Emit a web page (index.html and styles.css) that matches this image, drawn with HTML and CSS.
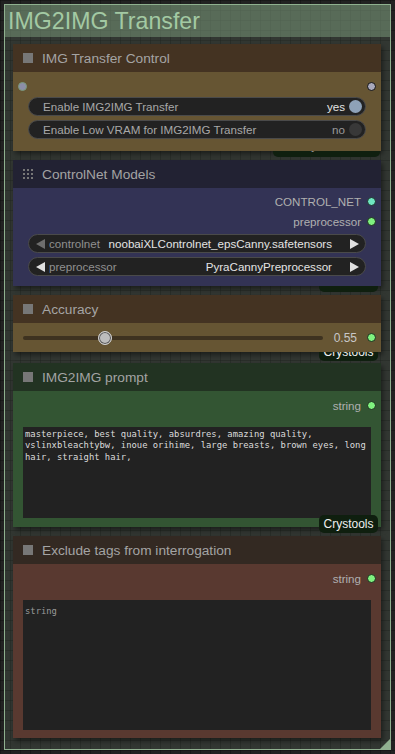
FILE: index.html
```html
<!DOCTYPE html>
<html>
<head>
<meta charset="utf-8">
<link rel="stylesheet" href="styles.css">
</head>
<body>
<div class="group">
  <div class="group-header">IMG2IMG Transfer</div>
  <div class="group-body">

    <div class="node node-yellow n1">
      <div class="node-title"><span class="sq"></span>IMG Transfer Control</div>
      <div class="node-body">
        <div class="slot-row both">
          <span class="dot dot-in"></span>
          <span class="dot dot-out-gray"></span>
        </div>
        <div class="widgets">
          <div class="pill toggle">
            <span class="lbl">Enable IMG2IMG Transfer</span>
            <span class="val on">yes</span>
            <span class="knob knob-on"></span>
          </div>
          <div class="pill toggle">
            <span class="lbl">Enable Low VRAM for IMG2IMG Transfer</span>
            <span class="val">no</span>
            <span class="knob knob-off"></span>
          </div>
        </div>
      </div>
      <div class="badge badge-wide"><span>Comfyroll Studio</span></div>
    </div>

    <div class="node node-blue n2">
      <div class="node-title"><span class="grip">
        <svg width="10" height="10" viewBox="0 0 10 10"><g fill="#777"><rect x="0" y="0" width="2" height="2"/><rect x="4" y="0" width="2" height="2"/><rect x="8" y="0" width="2" height="2"/><rect x="0" y="4" width="2" height="2"/><rect x="4" y="4" width="2" height="2"/><rect x="8" y="4" width="2" height="2"/><rect x="0" y="8" width="2" height="2"/><rect x="4" y="8" width="2" height="2"/><rect x="8" y="8" width="2" height="2"/></g></svg>
      </span>ControlNet Models</div>
      <div class="node-body">
        <div class="slot-row out"><span class="slot-name">CONTROL_NET</span><span class="dot dot-teal"></span></div>
        <div class="slot-row out"><span class="slot-name">preprocessor</span><span class="dot dot-green"></span></div>
        <div class="widgets">
          <div class="pill combo">
            <span class="arr arr-left dim"></span>
            <span class="lbl">controlnet</span>
            <span class="cval">noobaiXLControlnet_epsCanny.safetensors</span>
            <span class="arr arr-right"></span>
          </div>
          <div class="pill combo">
            <span class="arr arr-left"></span>
            <span class="lbl">preprocessor</span>
            <span class="cval">PyraCannyPreprocessor</span>
            <span class="arr arr-right"></span>
          </div>
        </div>
      </div>
      <div class="badge badge-empty"></div>
    </div>

    <div class="node node-yellow n3">
      <div class="node-title"><span class="sq"></span>Accuracy</div>
      <div class="node-body slider-body">
        <div class="slider">
          <div class="track"></div>
          <span class="thumb"></span>
        </div>
        <span class="slider-val">0.55</span>
        <span class="dot dot-green"></span>
      </div>
      <div class="badge badge-low">Crystools</div>
    </div>

    <div class="node node-green n4">
      <div class="node-title"><span class="sq"></span>IMG2IMG prompt</div>
      <div class="node-body">
        <div class="slot-row out"><span class="slot-name">string</span><span class="dot dot-green"></span></div>
        <div class="textarea prompt">masterpiece, best quality, absurdres, amazing quality, vslinxbleachtybw, inoue orihime, large breasts, brown eyes, long hair, straight hair,</div>
      </div>
      <div class="badge badge-top">Crystools</div>
    </div>

    <div class="node node-brown n5">
      <div class="node-title"><span class="sq"></span>Exclude tags from interrogation</div>
      <div class="node-body">
        <div class="slot-row out"><span class="slot-name">string</span><span class="dot dot-green"></span></div>
        <div class="textarea exclude"><span class="ph">string</span></div>
      </div>
    </div>

  </div>
  <span class="resize"></span>
</div>
</body>
</html>
```

FILE: styles.css
```css
html, body {
  margin: 0;
  padding: 0;
}
body {
  width: 395px;
  height: 754px;
  overflow: hidden;
  background-color: #222;
  background-image:
    linear-gradient(to right, rgba(0,0,0,0.25) 1px, transparent 1px),
    linear-gradient(to bottom, rgba(0,0,0,0.25) 1px, transparent 1px);
  background-size: 10px 10px;
  font-family: "Liberation Sans", Arial, sans-serif;
}
.group {
  position: relative;
  box-sizing: border-box;
  margin: 4px 0 0 4px;
  width: 387px;
  height: 746px;
  border: 1px solid #8fb08f;
  background: rgba(136,170,136,0.16);
  display: flex;
  flex-direction: column;
}
.group-header {
  height: 32px;
  background: rgba(136,170,136,0.45);
  color: #a3c9a3;
  font-size: 23.2px;
  line-height: 32px;
  padding-left: 3px;
  white-space: nowrap;
}
.group-body {
  display: flex;
  flex-direction: column;
  padding: 7px 0 0 8px;
}
.node {
  position: relative;
  width: 368px;
  box-shadow: 2px 3px 5px rgba(0,0,0,0.45);
}
.n1 { z-index: 5; }
.n2 { margin-top: 9px; z-index: 4; }
.n3 { margin-top: 9px; z-index: 3; }
.n4 { margin-top: 11px; z-index: 2; }
.n5 { margin-top: 9px; z-index: 1; }

.node-title {
  position: relative;
  z-index: 2;
  height: 28px;
  display: flex;
  align-items: center;
  color: #a4a4a4;
  font-size: 13.7px;
  padding-left: 10px;
  white-space: nowrap;
}
.sq, .grip {
  width: 10px;
  height: 10px;
  margin-right: 9px;
  flex: none;
}
.sq { background: #777; }
.grip svg { display: block; }
.node-body {
  position: relative;
  z-index: 2;
}
.node-yellow .node-title { background: #443322; }
.node-yellow .node-body { background: #665533; }
.node-blue .node-title { background: #222233; }
.node-blue .node-body { background: #333355; }
.node-green .node-title { background: #223322; }
.node-green .node-body { background: #335533; }
.node-brown .node-title { background: #332922; }
.node-brown .node-body { background: #593930; }

.n1 .node-body { height: 79px; padding-top: 4px; box-sizing: border-box; }
.n2 .node-body { height: 98px; padding-top: 4px; box-sizing: border-box; }
.n3 .node-body { height: 29px; }
.n4 .node-body { height: 136px; padding-top: 4px; box-sizing: border-box; }
.n5 .node-body { height: 174px; padding-top: 4px; box-sizing: border-box; }

.slot-row {
  height: 20px;
  display: flex;
  align-items: center;
  padding: 0 5px 0 5px;
  font-size: 11.6px;
  color: #b0b0b0;
}
.n2 .slot-row { height: 19.5px; }
.slot-row.both { justify-content: space-between; }
.slot-row.out { justify-content: flex-end; }
.slot-name { margin-right: 6px; white-space: nowrap; }

.dot {
  display: block;
  box-sizing: border-box;
  width: 9px;
  height: 9px;
  border-radius: 50%;
  flex: none;
}
.dot-in { background: #8c8ea8; border: 1px solid #7a9a7a; }
.dot-out-gray { background: #a8a8bc; border: 1.5px solid #111; }
.dot-green { background: #7ff27f; border: 1.5px solid #1c2a1c; }
.dot-teal { background: #6fe6c0; border: 1.5px solid #1c2a2a; }

.widgets {
  display: flex;
  flex-direction: column;
  gap: 4px;
  margin: 1px 15px 0 15px;
}
.n2 .widgets { margin-top: 3px; }
.pill {
  box-sizing: border-box;
  height: 19px;
  border-radius: 10px;
  background: #222;
  border: 1px solid #4a4a4a;
  display: flex;
  align-items: center;
  font-size: 11.6px;
  white-space: nowrap;
}
.toggle { padding: 0 3px 0 14px; }
.toggle .lbl { color: #a8a8a8; flex: 1; }
.toggle .val { color: #9a9a9a; margin-right: 4px; }
.toggle .val.on { color: #e4e4e4; }
.knob {
  width: 13px;
  height: 13px;
  border-radius: 50%;
}
.knob-on { background: #8ea2b8; }
.knob-off { background: #383838; }

.combo { padding: 0 6px 0 7px; }
.arr { width: 0; height: 0; border-top: 5px solid transparent; border-bottom: 5px solid transparent; flex: none; }
.arr-left { border-right: 9px solid #e0e0e0; }
.arr-left.dim { border-right-color: #6e6e6e; }
.arr-right { border-left: 9px solid #e0e0e0; }
.combo .lbl { color: #909090; margin-left: 4px; }
.combo .cval { color: #e4e4e4; flex: 1; text-align: right; margin-right: 18px; }

.slider-body {
  display: flex;
  align-items: center;
  padding: 0 5px 0 10px;
}
.slider {
  position: relative;
  width: 300px;
  height: 14px;
  display: flex;
  align-items: center;
}
.track {
  width: 100%;
  height: 4px;
  border-radius: 2px;
  background: #3e3220;
}
.thumb {
  position: absolute;
  left: 75px;
  top: 0;
  box-sizing: border-box;
  width: 14px;
  height: 14px;
  border-radius: 50%;
  background: #bdbdbd;
  border: 1.5px solid #d0d0d0;
  box-shadow: inset 0 0 0 1px #555;
}
.slider-val {
  flex: 1;
  text-align: right;
  color: #c8c8c8;
  font-size: 12px;
  margin-right: 10px;
}

.textarea {
  box-sizing: border-box;
  margin: 12px 10px 0 10px;
  background: #222;
  font-family: "DejaVu Sans Mono", monospace;
  font-size: 8.85px;
  line-height: 11.4px;
  color: #dcdcdc;
  padding: 2px 2px 0 2px;
  word-wrap: break-word;
}
.prompt { height: 91px; }
.exclude { height: 130px; padding-top: 6px; }
.ph { color: #9a9a9a; }

.badge {
  position: absolute;
  right: 3px;
  bottom: -6px;
  z-index: 1;
  height: 18px;
  width: 59px;
  box-sizing: border-box;
  border-radius: 5px;
  background: #0f1f0f;
  color: #f0f0f0;
  font-size: 12px;
  line-height: 18px;
  text-align: center;
  white-space: nowrap;
  overflow: hidden;
}
.badge-wide { width: 107px; right: 1px; line-height: 12px; color: #8a8a8a; }
.badge-low { bottom: -9px; }
.badge-top { z-index: 3; }

.resize {
  position: absolute;
  right: 0;
  bottom: 0;
  width: 0;
  height: 0;
  border-left: 10px solid transparent;
  border-bottom: 10px solid #8fb08f;
}
```
